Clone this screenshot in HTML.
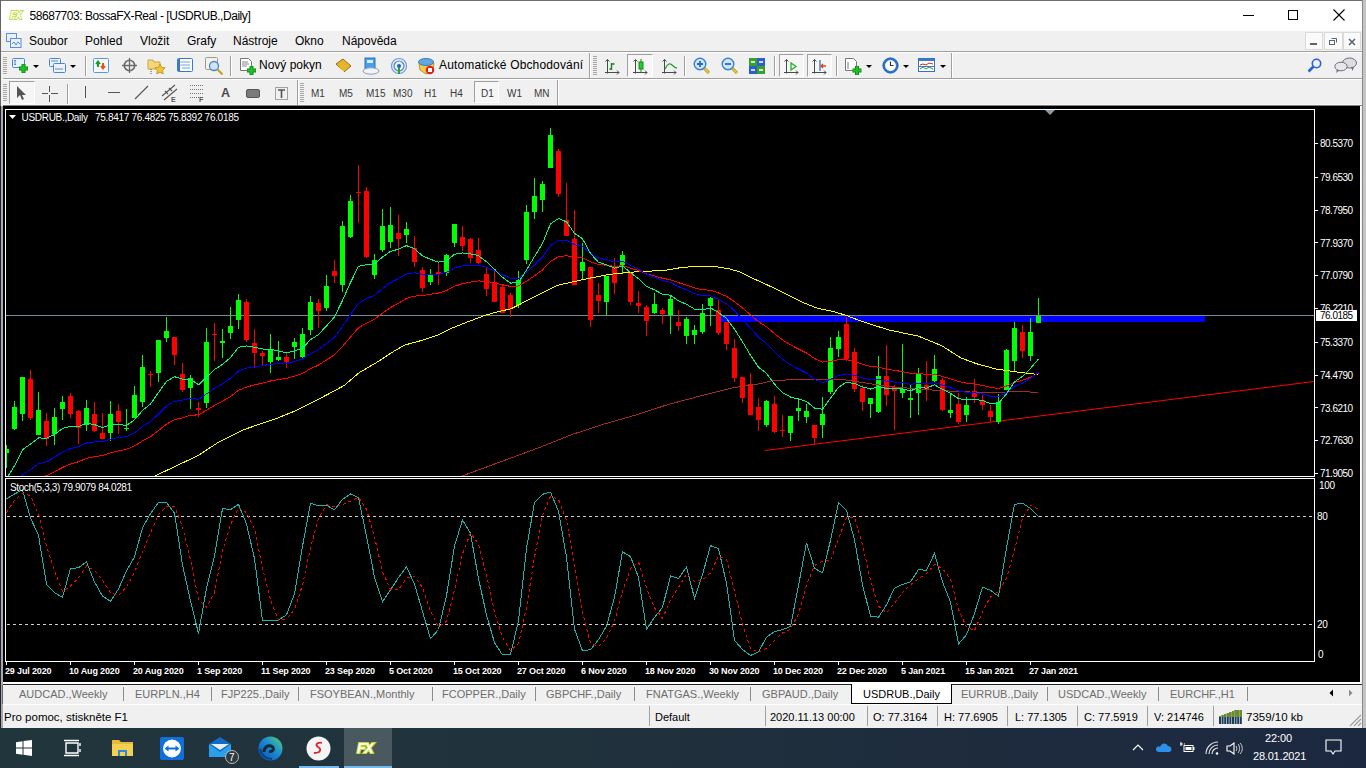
<!DOCTYPE html>
<html><head><meta charset="utf-8">
<style>
*{margin:0;padding:0;box-sizing:border-box}
html,body{width:1366px;height:768px;overflow:hidden;background:#f0f0f0;font-family:"Liberation Sans",sans-serif;font-size:12px;color:#000}
.a{position:absolute}
.t{position:absolute;white-space:nowrap;line-height:14px}
.sep{position:absolute;width:1px;background:#a0a0a0;box-shadow:1px 0 0 #fff}
.grip{position:absolute;width:4px;background:repeating-linear-gradient(to bottom,#a8a8a8 0 1px,transparent 1px 2px)}
.pbtn{position:absolute;border:1px solid #c8c8c8;background:#f7f7f7}
.dd{position:absolute;width:0;height:0;border-left:3px solid transparent;border-right:3px solid transparent;border-top:3px solid #000}
.tab{position:absolute;top:684px;height:19px;line-height:20px;font-size:11px;color:#6d6d6d;white-space:nowrap}
.tsep{position:absolute;top:687px;width:1px;height:14px;background:#8c8c8c}
.st{position:absolute;top:705px;height:22px;line-height:22px;font-size:11px;white-space:nowrap}
.ssep{position:absolute;top:706px;width:1px;height:20px;background:#a0a0a0}
</style></head><body>
<!-- title bar -->
<div class="a" style="left:0;top:0;width:1362px;height:31px;background:#fff"></div>
<div class="a" style="left:0;top:0;width:1362px;height:1px;background:#6f6f6f"></div>
<div class="a" style="left:0;top:0;width:1px;height:106px;background:#646464"></div>
<div class="a" style="left:0;top:106px;width:1px;height:622px;background:#1c2433"></div>
<div class="a" style="left:1px;top:106px;width:2px;height:622px;background:#a9a9a9"></div>
<div class="a" style="left:1362px;top:0;width:4px;height:728px;background:#c4c4c4"></div>
<div class="a" style="left:1362px;top:0;width:1px;height:728px;background:#8a8a8a"></div>
<div class="a" style="left:2px;top:685px;width:1px;height:19px;background:#6a6a6a"></div>
<svg class="a" style="left:8px;top:9px" width="19" height="11" viewBox="0 0 19 11"><text x="2" y="9.5" font-family="Liberation Sans" font-weight="bold" font-style="italic" font-size="10" fill="#fff" stroke="#c4d84a" stroke-width="1.8" paint-order="stroke" letter-spacing="-0.8">FX</text></svg>
<div class="t" style="left:29.5px;top:9px;font-size:12px;letter-spacing:-0.45px">58687703: BossaFX-Real - [USDRUB.,Daily]</div>
<div class="a" style="left:1243px;top:15px;width:11px;height:1px;background:#000"></div>
<div class="a" style="left:1288px;top:10px;width:10px;height:10px;border:1px solid #000"></div>
<svg class="a" style="left:1333px;top:9px" width="12" height="12" viewBox="0 0 12 12"><path d="M0.5 0.5L11.5 11.5M11.5 0.5L0.5 11.5" stroke="#000" stroke-width="1.1"/></svg>

<!-- menu bar -->
<div class="a" style="left:1px;top:51px;width:1361px;height:1px;background:#a0a0a0"></div>
<div class="a" style="left:1px;top:52px;width:1361px;height:1px;background:#fff"></div>
<svg class="a" style="left:6px;top:33px" width="16" height="15" viewBox="0 0 16 15"><rect x="0.5" y="0.5" width="10" height="8" fill="#e8f0fa" stroke="#5b8fd6"/><rect x="4.5" y="5.5" width="10.5" height="9" fill="#e8f0fa" stroke="#5b8fd6"/><path d="M6 11l2-2 2 3 2-3 2 2" fill="none" stroke="#3a6fc0" stroke-width="0.8"/></svg>
<div class="t" style="left:29px;top:34px">Soubor</div>
<div class="t" style="left:85px;top:34px">Pohled</div>
<div class="t" style="left:140px;top:34px">Vložit</div>
<div class="t" style="left:187px;top:34px">Grafy</div>
<div class="t" style="left:233px;top:34px">Nástroje</div>
<div class="t" style="left:295px;top:34px">Okno</div>
<div class="t" style="left:342px;top:34px">Nápověda</div>
<div class="a" style="left:1305px;top:32px;width:18px;height:18px;background:#fafafa;border:1px solid #dadada"></div>
<div class="a" style="left:1324px;top:32px;width:19px;height:18px;background:#fafafa;border:1px solid #dadada"></div>
<div class="a" style="left:1343px;top:32px;width:18px;height:18px;background:#fafafa;border:1px solid #dadada"></div>
<div class="a" style="left:1310px;top:43px;width:7px;height:2px;background:#566573"></div>
<svg class="a" style="left:1329px;top:37px" width="9" height="9" viewBox="0 0 9 9"><rect x="0.5" y="3.5" width="5" height="4" fill="none" stroke="#566573"/><path d="M2.5 1.5h5v4" fill="none" stroke="#566573"/></svg>
<svg class="a" style="left:1348px;top:38px" width="8" height="8" viewBox="0 0 8 8"><path d="M1 1L7 7M7 1L1 7" stroke="#566573" stroke-width="1.6"/></svg>

<!-- toolbar 1 -->
<div class="a" style="left:3px;top:78px;width:1359px;height:1px;background:#a0a0a0"></div>
<div class="a" style="left:1px;top:79px;width:1361px;height:1px;background:#fff"></div>
<div class="grip" style="left:3px;top:57px;height:18px"></div>
<svg class="a" style="left:12px;top:57px" width="18" height="17" viewBox="0 0 18 17"><rect x="0.5" y="1.5" width="12" height="9" rx="1" fill="#eaf2fb" stroke="#4a86d0"/><path d="M3 3v5M2 4l1-1 1 1M2 7l1 1 1-1" stroke="#6a8ab0" fill="none"/><path d="M7.0 11.5h9.0M11.5 7.0v9.0" stroke="#0b8a10" stroke-width="4"/><path d="M7.5 11.5h8.0M11.5 7.5v8.0" stroke="#22c02a" stroke-width="2.2"/></svg>
<div class="dd" style="left:33px;top:65px"></div>
<svg class="a" style="left:49px;top:58px" width="18" height="16" viewBox="0 0 18 16"><rect x="0.5" y="0.5" width="11" height="8" rx="1" fill="#eaf2fb" stroke="#4a86d0"/><rect x="4.5" y="5.5" width="12" height="9" rx="1" fill="#eaf2fb" stroke="#4a86d0"/><path d="M2 3h7M6 11h8" stroke="#6a8ab0"/></svg>
<div class="dd" style="left:70px;top:65px"></div>
<div class="sep" style="left:85px;top:56px;height:20px"></div>
<svg class="a" style="left:93px;top:58px" width="17" height="16" viewBox="0 0 17 16"><rect x="0.5" y="0.5" width="15" height="14" rx="1" fill="#f4f8fd" stroke="#5a98dc"/><path d="M5 9V4M3 6l2-2.5L7 6" stroke="#1aa020" stroke-width="2" fill="none"/><path d="M10 5v5M8 8l2 2.5L12 8" stroke="#e85020" stroke-width="2" fill="none"/></svg>
<svg class="a" style="left:121px;top:57px" width="17" height="17" viewBox="0 0 17 17"><circle cx="8.5" cy="8.5" r="5.2" fill="none" stroke="#6a6a6a" stroke-width="1.6"/><path d="M8.5 1v15M1 8.5h15" stroke="#6a6a6a" stroke-width="1.3"/></svg>
<svg class="a" style="left:147px;top:57px" width="20" height="18" viewBox="0 0 20 18"><path d="M1 3h5l1 2h6v7H1z" fill="#f3d77a" stroke="#c9a640"/><path d="M13 7l1.6 3.3 3.6.5-2.6 2.5.6 3.6-3.2-1.7-3.2 1.7.6-3.6-2.6-2.5 3.6-.5z" fill="#f2c431" stroke="#b8901a" stroke-width="0.8"/><path d="M4 12v5" stroke="#555" stroke-dasharray="1,1"/></svg>
<svg class="a" style="left:177px;top:58px" width="17" height="15" viewBox="0 0 17 15"><rect x="0.5" y="0.5" width="15" height="13" rx="1" fill="#f7fbff" stroke="#3c78c8"/><rect x="1" y="1" width="2" height="12" fill="#3c78c8"/><path d="M5 4h8M5 7h8M5 10h8" stroke="#7aa4d8"/><path d="M3.5 4h1M3.5 7h1" stroke="#e03030"/></svg>
<svg class="a" style="left:205px;top:57px" width="19" height="18" viewBox="0 0 19 18"><rect x="0.5" y="0.5" width="12" height="12" rx="1" fill="#f4f2ea" stroke="#a09a80"/><circle cx="9" cy="9" r="4.5" fill="#cfe3f5" stroke="#4a86c8" stroke-width="1.3"/><path d="M12.5 12.5l5 5" stroke="#c8a020" stroke-width="2.2"/></svg>
<div class="sep" style="left:230px;top:56px;height:20px"></div>
<svg class="a" style="left:240px;top:58px" width="17" height="18" viewBox="0 0 17 18"><path d="M0.5 0.5h8l3 3v9h-11z" fill="#fff" stroke="#777"/><path d="M2 4h6M2 6h7M2 8h5" stroke="#888"/><path d="M7.0 12.5h9.0M11.5 8.0v9.0" stroke="#0b8a10" stroke-width="4"/><path d="M7.5 12.5h8.0M11.5 8.5v8.0" stroke="#22c02a" stroke-width="2.2"/></svg>
<svg class="a" style="left:334px;top:58px" width="18" height="16" viewBox="0 0 18 16"><path d="M2 6l7-5 8 7-7 6z" fill="#e7b52a" stroke="#9a6d10"/><path d="M3 8l7 6" stroke="#fff3b0"/></svg>
<svg class="a" style="left:362px;top:57px" width="18" height="18" viewBox="0 0 18 18"><rect x="3" y="1" width="10" height="11" fill="#4aa0e8" stroke="#2a70b8"/><rect x="5" y="3" width="6" height="3" fill="#d8ecfc"/><ellipse cx="9" cy="14" rx="8" ry="3.2" fill="#f0f4f8" stroke="#8aa0b8"/></svg>
<svg class="a" style="left:390px;top:57px" width="18" height="18" viewBox="0 0 18 18"><circle cx="9" cy="9" r="7.5" fill="none" stroke="#6a9ad8" stroke-width="1.2"/><circle cx="9" cy="9" r="5" fill="none" stroke="#4a86d0" stroke-width="1.2"/><circle cx="9" cy="9" r="2" fill="#2060c0"/><path d="M9 10v7" stroke="#30a030" stroke-width="2"/></svg>
<svg class="a" style="left:417px;top:57px" width="19" height="18" viewBox="0 0 19 18"><path d="M2 6l7-1 8 1-1 8-7 3-6-4z" fill="#f2cc4a" stroke="#c0962a"/><ellipse cx="9" cy="5" rx="7.5" ry="3.5" fill="#62a8e0" stroke="#3a7ab8"/><circle cx="13" cy="13" r="4.3" fill="#e02020"/><rect x="11" y="11" width="4" height="4" fill="#fff"/></svg>
<div class="sep" style="left:589px;top:53px;height:25px"></div>
<div class="grip" style="left:593px;top:56px;height:19px"></div>
<svg class="a" style="left:604px;top:58px" width="17" height="17" viewBox="0 0 17 17"><path d="M3.5 1.5v14M1.5 3.5l2-2 2 2M1 14.5h14M13 12.5l2 2-2 2" stroke="#4a4a4a" fill="none" stroke-width="1"/><path d="M7.5 12V5M7.5 6h3M5.5 11h2" stroke="#108a10" stroke-width="1.4"/></svg>
<div class="a" style="left:627px;top:54px;width:26px;height:23px;border:1px solid;border-color:#a0a0a0 #fff #fff #a0a0a0;background:#f6f6f6"></div>
<svg class="a" style="left:632px;top:58px" width="17" height="17" viewBox="0 0 17 17"><path d="M3.5 1.5v14M1.5 3.5l2-2 2 2M1 14.5h14M13 12.5l2 2-2 2" stroke="#4a4a4a" fill="none" stroke-width="1"/><path d="M9 1v13" stroke="#108a10"/><rect x="7" y="4" width="4" height="7" fill="#20d030" stroke="#108a10"/></svg>
<svg class="a" style="left:661px;top:58px" width="17" height="17" viewBox="0 0 17 17"><path d="M3.5 1.5v14M1.5 3.5l2-2 2 2M1 14.5h14M13 12.5l2 2-2 2" stroke="#4a4a4a" fill="none" stroke-width="1"/><path d="M4 11c3-6 5-6 7-4s3 3 5 3" stroke="#20a030" fill="none" stroke-width="1.3"/></svg>
<div class="sep" style="left:684px;top:56px;height:20px"></div>
<svg class="a" style="left:693px;top:57px" width="18" height="18" viewBox="0 0 18 18"><path d="M10.5 10.5l5.5 5.5" stroke="#b08a10" stroke-width="3"/><path d="M10.5 10.5l5.5 5.5" stroke="#f0d040" stroke-width="1.5"/><circle cx="7" cy="7" r="5.8" fill="#d0e6f8" stroke="#3a82d0" stroke-width="1.4"/><path d="M4 7h6M7 4v6" stroke="#2a6ac0" stroke-width="1.8"/></svg>
<svg class="a" style="left:721px;top:57px" width="18" height="18" viewBox="0 0 18 18"><path d="M10.5 10.5l5.5 5.5" stroke="#b08a10" stroke-width="3"/><path d="M10.5 10.5l5.5 5.5" stroke="#f0d040" stroke-width="1.5"/><circle cx="7" cy="7" r="5.8" fill="#d0e6f8" stroke="#3a82d0" stroke-width="1.4"/><path d="M4 7h6" stroke="#2a6ac0" stroke-width="1.8"/></svg>
<svg class="a" style="left:749px;top:58px" width="17" height="16" viewBox="0 0 17 16"><rect x="0" y="0" width="8" height="8" fill="#38a030"/><rect x="8" y="0" width="8" height="8" fill="#2a60c8"/><rect x="0" y="8" width="8" height="8" fill="#2a60c8"/><rect x="8" y="8" width="8" height="8" fill="#38a030"/><path d="M2 4h4M10 4h4M2 12h4M10 12h4" stroke="#fff" stroke-width="1.5"/></svg>
<div class="sep" style="left:774px;top:56px;height:20px"></div>
<div class="a" style="left:779px;top:54px;width:25px;height:23px;border:1px solid;border-color:#a0a0a0 #fff #fff #a0a0a0;background:#f6f6f6"></div>
<svg class="a" style="left:783px;top:58px" width="17" height="17" viewBox="0 0 17 17"><path d="M3.5 1.5v14M1.5 3.5l2-2 2 2M1 14.5h14M13 12.5l2 2-2 2" stroke="#4a4a4a" fill="none" stroke-width="1"/><path d="M8 5v7l5-3.5z" fill="none" stroke="#20b030" stroke-width="1.3"/></svg>
<div class="a" style="left:807px;top:54px;width:25px;height:23px;border:1px solid;border-color:#a0a0a0 #fff #fff #a0a0a0;background:#f6f6f6"></div>
<svg class="a" style="left:811px;top:58px" width="17" height="17" viewBox="0 0 17 17"><path d="M3.5 1.5v14M1.5 3.5l2-2 2 2M1 14.5h14M13 12.5l2 2-2 2" stroke="#4a4a4a" fill="none" stroke-width="1"/><path d="M9 2v11" stroke="#2a70c0" stroke-width="1.3"/><path d="M15 8h-5M12 6l-2 2 2 2" stroke="#e04020" fill="none" stroke-width="1.3"/></svg>
<div class="sep" style="left:836px;top:56px;height:20px"></div>
<svg class="a" style="left:845px;top:57px" width="18" height="19" viewBox="0 0 18 19"><path d="M0.5 1.5h8l3 3v9h-11z" fill="#fff" stroke="#777"/><path d="M3 5v7" stroke="#777"/><path d="M7.5 13.5h9.0M12 9.0v9.0" stroke="#0b8a10" stroke-width="4"/><path d="M8.0 13.5h8.0M12 9.5v8.0" stroke="#22c02a" stroke-width="2.2"/></svg>
<div class="dd" style="left:866px;top:65px"></div>
<svg class="a" style="left:882px;top:57px" width="17" height="17" viewBox="0 0 17 17"><circle cx="8.5" cy="8.5" r="7.6" fill="#2a78d0" stroke="#1a5aa8"/><circle cx="8.5" cy="8.5" r="5.4" fill="#fff"/><path d="M8.5 4.5v4h3" stroke="#333" fill="none" stroke-width="1.2"/></svg>
<div class="dd" style="left:903px;top:65px"></div>
<svg class="a" style="left:918px;top:58px" width="18" height="15" viewBox="0 0 18 15"><rect x="0.5" y="0.5" width="16" height="13" fill="#fff" stroke="#3a70c0"/><rect x="1" y="1" width="15" height="2" fill="#3a78c8"/><path d="M2 7l3-1 3 1 3-2 4 1" stroke="#c03020" fill="none"/><path d="M2 11l3-2 3 2 3-2 4 2" stroke="#20a030" fill="none"/><path d="M1 8.5h15" stroke="#3a78c8"/></svg>
<div class="dd" style="left:940px;top:65px"></div>
<div class="sep" style="left:951px;top:53px;height:25px"></div>
<svg class="a" style="left:1307px;top:58px" width="15" height="15" viewBox="0 0 15 15"><circle cx="9.5" cy="5.5" r="4.2" fill="none" stroke="#2a62d0" stroke-width="1.6"/><path d="M6.5 8.5l-5 5" stroke="#2a62d0" stroke-width="2.6"/></svg>
<svg class="a" style="left:1334px;top:57px" width="23" height="16" viewBox="0 0 23 16"><ellipse cx="15.5" cy="6" rx="7" ry="5" fill="#dcdce4" stroke="#707070"/><path d="M17 10l1.5 4 1.5-4z" fill="#707070"/><ellipse cx="7" cy="9.5" rx="6.2" ry="4.3" fill="#e6e6ec" stroke="#707070"/><path d="M3 12.5l-1 3.5 3.5-2.5z" fill="#707070"/></svg>
<div class="t" style="left:259px;top:58px">Nový pokyn</div>
<div class="t" style="left:439px;top:58px;letter-spacing:0.15px">Automatické Obchodování</div>

<!-- toolbar 2 -->
<div class="a" style="left:3px;top:104px;width:1359px;height:1px;background:#f8f8f8"></div>
<div class="a" style="left:3px;top:105px;width:1359px;height:1px;background:#828282"></div>
<div class="grip" style="left:3px;top:84px;height:18px"></div>
<div class="a" style="left:9px;top:81px;width:26px;height:23px;border:1px solid;border-color:#a0a0a0 #fff #fff #a0a0a0;background:#f6f6f6"></div>
<svg class="a" style="left:16px;top:86px" width="10" height="14" viewBox="0 0 10 14"><path d="M1 0v12l3-3 2 5 2-1-2-4h4z" fill="#555"/></svg>
<svg class="a" style="left:42px;top:86px" width="16" height="16" viewBox="0 0 16 16"><path d="M7.5 0v6M7.5 9v7M0 7.5h6M9 7.5h7" stroke="#555" stroke-width="1"/></svg>
<div class="sep" style="left:67px;top:84px;height:20px"></div>
<div class="a" style="left:85px;top:86px;width:1px;height:12px;background:#555"></div>
<div class="a" style="left:108px;top:92px;width:12px;height:1px;background:#555"></div>
<svg class="a" style="left:134px;top:85px" width="15" height="15" viewBox="0 0 15 15"><path d="M1 14L14 1" stroke="#555" stroke-width="1.1"/></svg>
<svg class="a" style="left:161px;top:83px" width="17" height="20" viewBox="0 0 17 20"><path d="M1 13L14 2M3 17L16 6M4 8l3 3M8 5l3 3" stroke="#555" stroke-width="1.1"/><text x="10" y="19" font-size="7" font-weight="bold" font-family="Liberation Sans" fill="#555">E</text></svg>
<svg class="a" style="left:189px;top:84px" width="18" height="19" viewBox="0 0 18 19"><path d="M1 1.5h13M1 5.5h13M1 9.5h13M1 13.5h13" stroke="#777" stroke-dasharray="1,1"/><text x="10" y="18" font-size="7" font-weight="bold" font-family="Liberation Sans" fill="#555">F</text></svg>
<div class="t" style="left:221px;top:86px;font-size:12.5px;color:#4a4a4a;font-weight:bold">A</div>
<svg class="a" style="left:246px;top:89px" width="15" height="10" viewBox="0 0 15 10"><rect x="0.5" y="0.5" width="13" height="8" rx="1.5" fill="#7a7a7a" stroke="#555"/></svg>
<svg class="a" style="left:275px;top:87px" width="14" height="14" viewBox="0 0 14 14"><rect x="0.5" y="0.5" width="12" height="12" fill="none" stroke="#555" stroke-dasharray="1,1"/><path d="M3 3h7M6.5 3v8" stroke="#555" stroke-width="1.6"/></svg>
<div class="sep" style="left:297px;top:80px;height:25px"></div>
<div class="grip" style="left:300px;top:83px;height:19px"></div>
<div class="a" style="left:474px;top:81px;width:25px;height:22px;border:1px solid;border-color:#a0a0a0 #fff #fff #a0a0a0;background:#f6f6f6"></div>
<div class="t" style="left:311px;top:87px;font-size:10px;color:#3a3a3a">M1</div>
<div class="t" style="left:339px;top:87px;font-size:10px;color:#3a3a3a">M5</div>
<div class="t" style="left:366px;top:87px;font-size:10px;color:#3a3a3a">M15</div>
<div class="t" style="left:393px;top:87px;font-size:10px;color:#3a3a3a">M30</div>
<div class="t" style="left:424px;top:87px;font-size:10px;color:#3a3a3a">H1</div>
<div class="t" style="left:450px;top:87px;font-size:10px;color:#3a3a3a">H4</div>
<div class="t" style="left:481px;top:87px;font-size:10px;color:#3a3a3a">D1</div>
<div class="t" style="left:507px;top:87px;font-size:10px;color:#3a3a3a">W1</div>
<div class="t" style="left:534px;top:87px;font-size:10px;color:#3a3a3a">MN</div>
<div class="sep" style="left:557px;top:80px;height:25px"></div>

<!-- chart area -->
<div class="a" style="left:3px;top:106px;width:1359px;height:579px;background:#f0f0f0"></div>
<div class="a" style="left:3px;top:106px;width:1357px;height:576px;background:#000"></div>
<div class="a" style="left:1360px;top:106px;width:1px;height:578px;background:#fff"></div>
<div class="a" style="left:3px;top:682px;width:1358px;height:2px;background:#fff"></div>
<div class="a" style="left:3px;top:684px;width:1359px;height:1px;background:#222"></div>
<svg class="a" style="left:0;top:0" width="1366" height="768" viewBox="0 0 1366 768">
<defs><clipPath id="cm"><rect x="6" y="110" width="1308" height="366"/></clipPath>
<clipPath id="cs"><rect x="6" y="479" width="1308" height="182"/></clipPath></defs>
<!-- frames -->
<rect x="5.5" y="109.5" width="1309" height="367" fill="none" stroke="#fff"/>
<rect x="5.5" y="478.5" width="1309" height="183" fill="none" stroke="#fff"/>
<g clip-path="url(#cm)">
<line x1="6" y1="315.5" x2="1314" y2="315.5" stroke="#778899"/>
<rect x="721" y="316" width="484" height="6" fill="#0000ff"/>
<line x1="765" y1="450.5" x2="1314" y2="381.5" stroke="#ff0000"/>
<rect x="6" y="445" width="1" height="23" fill="#00ff00"/>
<rect x="6" y="449" width="3" height="4" fill="#00ff00"/>
<rect x="14" y="401" width="1" height="29" fill="#00ff00"/>
<rect x="12" y="407" width="5" height="22" fill="#00ff00"/>
<rect x="22" y="377" width="1" height="44" fill="#00ff00"/>
<rect x="20" y="377" width="5" height="37" fill="#00ff00"/>
<rect x="30" y="370" width="1" height="50" fill="#ff0000"/>
<rect x="28" y="379" width="5" height="39" fill="#ff0000"/>
<rect x="38" y="392" width="1" height="43" fill="#00ff00"/>
<rect x="36" y="410" width="5" height="25" fill="#00ff00"/>
<rect x="46" y="413" width="1" height="33" fill="#ff0000"/>
<rect x="44" y="421" width="5" height="18" fill="#ff0000"/>
<rect x="54" y="408" width="1" height="37" fill="#00ff00"/>
<rect x="52" y="417" width="5" height="17" fill="#00ff00"/>
<rect x="62" y="396" width="1" height="24" fill="#00ff00"/>
<rect x="60" y="402" width="5" height="7" fill="#00ff00"/>
<rect x="70" y="393" width="1" height="25" fill="#ff0000"/>
<rect x="68" y="396" width="5" height="18" fill="#ff0000"/>
<rect x="78" y="410" width="1" height="34" fill="#ff0000"/>
<rect x="76" y="411" width="5" height="17" fill="#ff0000"/>
<rect x="86" y="400" width="1" height="31" fill="#00ff00"/>
<rect x="84" y="408" width="5" height="17" fill="#00ff00"/>
<rect x="94" y="402" width="1" height="30" fill="#ff0000"/>
<rect x="92" y="414" width="5" height="17" fill="#ff0000"/>
<rect x="102" y="413" width="1" height="26" fill="#ff0000"/>
<rect x="100" y="433" width="5" height="6" fill="#ff0000"/>
<rect x="110" y="401" width="1" height="40" fill="#00ff00"/>
<rect x="108" y="414" width="5" height="19" fill="#00ff00"/>
<rect x="118" y="404" width="1" height="30" fill="#ff0000"/>
<rect x="116" y="411" width="5" height="11" fill="#ff0000"/>
<rect x="126" y="409" width="1" height="22" fill="#00ff00"/>
<rect x="124" y="428" width="5" height="1" fill="#00ff00"/>
<rect x="134" y="386" width="1" height="32" fill="#00ff00"/>
<rect x="132" y="395" width="5" height="23" fill="#00ff00"/>
<rect x="142" y="355" width="1" height="52" fill="#00ff00"/>
<rect x="140" y="367" width="5" height="35" fill="#00ff00"/>
<rect x="150" y="371" width="1" height="16" fill="#ff0000"/>
<rect x="148" y="374" width="5" height="1" fill="#ff0000"/>
<rect x="158" y="340" width="1" height="42" fill="#00ff00"/>
<rect x="156" y="340" width="5" height="33" fill="#00ff00"/>
<rect x="166" y="317" width="1" height="25" fill="#00ff00"/>
<rect x="164" y="331" width="5" height="7" fill="#00ff00"/>
<rect x="174" y="337" width="1" height="28" fill="#ff0000"/>
<rect x="172" y="337" width="5" height="18" fill="#ff0000"/>
<rect x="182" y="363" width="1" height="29" fill="#ff0000"/>
<rect x="180" y="374" width="5" height="16" fill="#ff0000"/>
<rect x="190" y="375" width="1" height="34" fill="#00ff00"/>
<rect x="188" y="378" width="5" height="10" fill="#00ff00"/>
<rect x="198" y="402" width="1" height="15" fill="#ff0000"/>
<rect x="196" y="408" width="5" height="2" fill="#ff0000"/>
<rect x="206" y="328" width="1" height="80" fill="#00ff00"/>
<rect x="204" y="342" width="5" height="61" fill="#00ff00"/>
<rect x="214" y="323" width="1" height="38" fill="#ff0000"/>
<rect x="212" y="334" width="5" height="1" fill="#ff0000"/>
<rect x="222" y="329" width="1" height="29" fill="#00ff00"/>
<rect x="220" y="341" width="5" height="2" fill="#00ff00"/>
<rect x="230" y="307" width="1" height="32" fill="#00ff00"/>
<rect x="228" y="326" width="5" height="7" fill="#00ff00"/>
<rect x="238" y="294" width="1" height="35" fill="#00ff00"/>
<rect x="236" y="300" width="5" height="20" fill="#00ff00"/>
<rect x="246" y="299" width="1" height="43" fill="#ff0000"/>
<rect x="244" y="302" width="5" height="38" fill="#ff0000"/>
<rect x="254" y="329" width="1" height="39" fill="#ff0000"/>
<rect x="252" y="343" width="5" height="10" fill="#ff0000"/>
<rect x="262" y="351" width="1" height="14" fill="#ff0000"/>
<rect x="260" y="353" width="5" height="3" fill="#ff0000"/>
<rect x="270" y="334" width="1" height="39" fill="#00ff00"/>
<rect x="268" y="350" width="5" height="12" fill="#00ff00"/>
<rect x="278" y="341" width="1" height="20" fill="#00ff00"/>
<rect x="276" y="357" width="5" height="3" fill="#00ff00"/>
<rect x="286" y="352" width="1" height="16" fill="#ff0000"/>
<rect x="284" y="357" width="5" height="5" fill="#ff0000"/>
<rect x="294" y="338" width="1" height="21" fill="#00ff00"/>
<rect x="292" y="342" width="5" height="5" fill="#00ff00"/>
<rect x="302" y="328" width="1" height="30" fill="#00ff00"/>
<rect x="300" y="334" width="5" height="23" fill="#00ff00"/>
<rect x="310" y="296" width="1" height="39" fill="#00ff00"/>
<rect x="308" y="302" width="5" height="28" fill="#00ff00"/>
<rect x="318" y="299" width="1" height="29" fill="#ff0000"/>
<rect x="316" y="303" width="5" height="8" fill="#ff0000"/>
<rect x="326" y="275" width="1" height="36" fill="#00ff00"/>
<rect x="324" y="286" width="5" height="22" fill="#00ff00"/>
<rect x="334" y="260" width="1" height="23" fill="#ff0000"/>
<rect x="332" y="271" width="5" height="5" fill="#ff0000"/>
<rect x="342" y="221" width="1" height="71" fill="#00ff00"/>
<rect x="340" y="226" width="5" height="59" fill="#00ff00"/>
<rect x="350" y="195" width="1" height="43" fill="#00ff00"/>
<rect x="348" y="201" width="5" height="36" fill="#00ff00"/>
<rect x="358" y="165" width="1" height="58" fill="#ff0000"/>
<rect x="356" y="192" width="5" height="1" fill="#ff0000"/>
<rect x="366" y="187" width="1" height="71" fill="#ff0000"/>
<rect x="364" y="191" width="5" height="66" fill="#ff0000"/>
<rect x="374" y="254" width="1" height="25" fill="#00ff00"/>
<rect x="372" y="260" width="5" height="15" fill="#00ff00"/>
<rect x="382" y="209" width="1" height="43" fill="#00ff00"/>
<rect x="380" y="226" width="5" height="24" fill="#00ff00"/>
<rect x="390" y="207" width="1" height="41" fill="#00ff00"/>
<rect x="388" y="225" width="5" height="17" fill="#00ff00"/>
<rect x="398" y="215" width="1" height="41" fill="#ff0000"/>
<rect x="396" y="233" width="5" height="6" fill="#ff0000"/>
<rect x="406" y="222" width="1" height="21" fill="#00ff00"/>
<rect x="404" y="229" width="5" height="6" fill="#00ff00"/>
<rect x="414" y="236" width="1" height="31" fill="#ff0000"/>
<rect x="412" y="248" width="5" height="14" fill="#ff0000"/>
<rect x="422" y="267" width="1" height="25" fill="#ff0000"/>
<rect x="420" y="270" width="5" height="18" fill="#ff0000"/>
<rect x="430" y="269" width="1" height="16" fill="#00ff00"/>
<rect x="428" y="274" width="5" height="8" fill="#00ff00"/>
<rect x="438" y="262" width="1" height="23" fill="#ff0000"/>
<rect x="436" y="272" width="5" height="2" fill="#ff0000"/>
<rect x="446" y="254" width="1" height="22" fill="#00ff00"/>
<rect x="444" y="255" width="5" height="18" fill="#00ff00"/>
<rect x="454" y="224" width="1" height="23" fill="#00ff00"/>
<rect x="452" y="224" width="5" height="19" fill="#00ff00"/>
<rect x="462" y="226" width="1" height="25" fill="#ff0000"/>
<rect x="460" y="237" width="5" height="9" fill="#ff0000"/>
<rect x="470" y="238" width="1" height="25" fill="#ff0000"/>
<rect x="468" y="239" width="5" height="19" fill="#ff0000"/>
<rect x="478" y="238" width="1" height="28" fill="#ff0000"/>
<rect x="476" y="250" width="5" height="13" fill="#ff0000"/>
<rect x="486" y="267" width="1" height="29" fill="#ff0000"/>
<rect x="484" y="274" width="5" height="15" fill="#ff0000"/>
<rect x="494" y="271" width="1" height="31" fill="#ff0000"/>
<rect x="492" y="282" width="5" height="20" fill="#ff0000"/>
<rect x="502" y="285" width="1" height="28" fill="#ff0000"/>
<rect x="500" y="287" width="5" height="26" fill="#ff0000"/>
<rect x="510" y="293" width="1" height="24" fill="#ff0000"/>
<rect x="508" y="295" width="5" height="14" fill="#ff0000"/>
<rect x="518" y="271" width="1" height="37" fill="#00ff00"/>
<rect x="516" y="280" width="5" height="25" fill="#00ff00"/>
<rect x="526" y="205" width="1" height="59" fill="#00ff00"/>
<rect x="524" y="212" width="5" height="48" fill="#00ff00"/>
<rect x="534" y="178" width="1" height="41" fill="#00ff00"/>
<rect x="532" y="196" width="5" height="16" fill="#00ff00"/>
<rect x="542" y="181" width="1" height="31" fill="#00ff00"/>
<rect x="540" y="184" width="5" height="16" fill="#00ff00"/>
<rect x="550" y="128" width="1" height="40" fill="#00ff00"/>
<rect x="548" y="135" width="5" height="33" fill="#00ff00"/>
<rect x="558" y="149" width="1" height="48" fill="#ff0000"/>
<rect x="556" y="151" width="5" height="43" fill="#ff0000"/>
<rect x="566" y="183" width="1" height="53" fill="#ff0000"/>
<rect x="564" y="220" width="5" height="16" fill="#ff0000"/>
<rect x="574" y="210" width="1" height="75" fill="#ff0000"/>
<rect x="572" y="239" width="5" height="46" fill="#ff0000"/>
<rect x="582" y="243" width="1" height="37" fill="#00ff00"/>
<rect x="580" y="262" width="5" height="9" fill="#00ff00"/>
<rect x="590" y="267" width="1" height="60" fill="#ff0000"/>
<rect x="588" y="267" width="5" height="53" fill="#ff0000"/>
<rect x="598" y="283" width="1" height="30" fill="#ff0000"/>
<rect x="596" y="295" width="5" height="6" fill="#ff0000"/>
<rect x="606" y="276" width="1" height="39" fill="#00ff00"/>
<rect x="604" y="276" width="5" height="26" fill="#00ff00"/>
<rect x="614" y="258" width="1" height="36" fill="#ff0000"/>
<rect x="612" y="267" width="5" height="16" fill="#ff0000"/>
<rect x="622" y="251" width="1" height="22" fill="#00ff00"/>
<rect x="620" y="255" width="5" height="10" fill="#00ff00"/>
<rect x="630" y="272" width="1" height="33" fill="#ff0000"/>
<rect x="628" y="272" width="5" height="30" fill="#ff0000"/>
<rect x="638" y="291" width="1" height="22" fill="#ff0000"/>
<rect x="636" y="303" width="5" height="3" fill="#ff0000"/>
<rect x="646" y="305" width="1" height="31" fill="#ff0000"/>
<rect x="644" y="307" width="5" height="14" fill="#ff0000"/>
<rect x="654" y="293" width="1" height="21" fill="#00ff00"/>
<rect x="652" y="304" width="5" height="9" fill="#00ff00"/>
<rect x="662" y="308" width="1" height="16" fill="#ff0000"/>
<rect x="660" y="310" width="5" height="4" fill="#ff0000"/>
<rect x="670" y="296" width="1" height="38" fill="#00ff00"/>
<rect x="668" y="299" width="5" height="16" fill="#00ff00"/>
<rect x="678" y="310" width="1" height="21" fill="#ff0000"/>
<rect x="676" y="322" width="5" height="4" fill="#ff0000"/>
<rect x="686" y="317" width="1" height="27" fill="#00ff00"/>
<rect x="684" y="319" width="5" height="17" fill="#00ff00"/>
<rect x="694" y="325" width="1" height="19" fill="#00ff00"/>
<rect x="692" y="330" width="5" height="5" fill="#00ff00"/>
<rect x="702" y="304" width="1" height="30" fill="#00ff00"/>
<rect x="700" y="313" width="5" height="19" fill="#00ff00"/>
<rect x="710" y="297" width="1" height="29" fill="#00ff00"/>
<rect x="708" y="298" width="5" height="8" fill="#00ff00"/>
<rect x="718" y="300" width="1" height="35" fill="#ff0000"/>
<rect x="716" y="310" width="5" height="23" fill="#ff0000"/>
<rect x="726" y="322" width="1" height="28" fill="#ff0000"/>
<rect x="724" y="322" width="5" height="22" fill="#ff0000"/>
<rect x="734" y="339" width="1" height="43" fill="#ff0000"/>
<rect x="732" y="348" width="5" height="30" fill="#ff0000"/>
<rect x="742" y="377" width="1" height="26" fill="#ff0000"/>
<rect x="740" y="377" width="5" height="21" fill="#ff0000"/>
<rect x="750" y="373" width="1" height="42" fill="#ff0000"/>
<rect x="748" y="384" width="5" height="31" fill="#ff0000"/>
<rect x="758" y="398" width="1" height="33" fill="#ff0000"/>
<rect x="756" y="407" width="5" height="13" fill="#ff0000"/>
<rect x="766" y="400" width="1" height="27" fill="#00ff00"/>
<rect x="764" y="401" width="5" height="24" fill="#00ff00"/>
<rect x="774" y="396" width="1" height="37" fill="#ff0000"/>
<rect x="772" y="404" width="5" height="28" fill="#ff0000"/>
<rect x="782" y="415" width="1" height="22" fill="#ff0000"/>
<rect x="780" y="430" width="5" height="1" fill="#ff0000"/>
<rect x="790" y="416" width="1" height="25" fill="#00ff00"/>
<rect x="788" y="416" width="5" height="17" fill="#00ff00"/>
<rect x="798" y="398" width="1" height="23" fill="#00ff00"/>
<rect x="796" y="408" width="5" height="3" fill="#00ff00"/>
<rect x="806" y="404" width="1" height="19" fill="#00ff00"/>
<rect x="804" y="411" width="5" height="6" fill="#00ff00"/>
<rect x="814" y="425" width="1" height="20" fill="#ff0000"/>
<rect x="812" y="425" width="5" height="13" fill="#ff0000"/>
<rect x="822" y="397" width="1" height="41" fill="#00ff00"/>
<rect x="820" y="414" width="5" height="11" fill="#00ff00"/>
<rect x="830" y="337" width="1" height="57" fill="#00ff00"/>
<rect x="828" y="348" width="5" height="44" fill="#00ff00"/>
<rect x="838" y="331" width="1" height="26" fill="#00ff00"/>
<rect x="836" y="337" width="5" height="12" fill="#00ff00"/>
<rect x="846" y="317" width="1" height="44" fill="#ff0000"/>
<rect x="844" y="324" width="5" height="35" fill="#ff0000"/>
<rect x="854" y="348" width="1" height="44" fill="#ff0000"/>
<rect x="852" y="352" width="5" height="37" fill="#ff0000"/>
<rect x="862" y="385" width="1" height="26" fill="#ff0000"/>
<rect x="860" y="388" width="5" height="14" fill="#ff0000"/>
<rect x="870" y="398" width="1" height="20" fill="#00ff00"/>
<rect x="868" y="398" width="5" height="6" fill="#00ff00"/>
<rect x="878" y="356" width="1" height="57" fill="#00ff00"/>
<rect x="876" y="376" width="5" height="36" fill="#00ff00"/>
<rect x="886" y="345" width="1" height="61" fill="#ff0000"/>
<rect x="884" y="376" width="5" height="19" fill="#ff0000"/>
<rect x="894" y="385" width="1" height="45" fill="#ff0000"/>
<rect x="892" y="387" width="5" height="4" fill="#ff0000"/>
<rect x="902" y="344" width="1" height="54" fill="#00ff00"/>
<rect x="900" y="389" width="5" height="4" fill="#00ff00"/>
<rect x="910" y="385" width="1" height="33" fill="#00ff00"/>
<rect x="908" y="398" width="5" height="2" fill="#00ff00"/>
<rect x="918" y="368" width="1" height="47" fill="#00ff00"/>
<rect x="916" y="373" width="5" height="20" fill="#00ff00"/>
<rect x="926" y="361" width="1" height="40" fill="#ff0000"/>
<rect x="924" y="385" width="5" height="5" fill="#ff0000"/>
<rect x="934" y="355" width="1" height="27" fill="#00ff00"/>
<rect x="932" y="369" width="5" height="12" fill="#00ff00"/>
<rect x="942" y="378" width="1" height="33" fill="#ff0000"/>
<rect x="940" y="380" width="5" height="30" fill="#ff0000"/>
<rect x="950" y="393" width="1" height="25" fill="#00ff00"/>
<rect x="948" y="410" width="5" height="3" fill="#00ff00"/>
<rect x="958" y="393" width="1" height="31" fill="#ff0000"/>
<rect x="956" y="404" width="5" height="18" fill="#ff0000"/>
<rect x="966" y="397" width="1" height="25" fill="#00ff00"/>
<rect x="964" y="405" width="5" height="10" fill="#00ff00"/>
<rect x="974" y="379" width="1" height="24" fill="#ff0000"/>
<rect x="972" y="391" width="5" height="6" fill="#ff0000"/>
<rect x="982" y="395" width="1" height="15" fill="#ff0000"/>
<rect x="980" y="400" width="5" height="5" fill="#ff0000"/>
<rect x="990" y="405" width="1" height="17" fill="#ff0000"/>
<rect x="988" y="411" width="5" height="6" fill="#ff0000"/>
<rect x="998" y="394" width="1" height="30" fill="#00ff00"/>
<rect x="996" y="402" width="5" height="20" fill="#00ff00"/>
<rect x="1006" y="349" width="1" height="41" fill="#00ff00"/>
<rect x="1004" y="350" width="5" height="40" fill="#00ff00"/>
<rect x="1014" y="322" width="1" height="49" fill="#00ff00"/>
<rect x="1012" y="328" width="5" height="33" fill="#00ff00"/>
<rect x="1022" y="325" width="1" height="33" fill="#ff0000"/>
<rect x="1020" y="332" width="5" height="19" fill="#ff0000"/>
<rect x="1030" y="318" width="1" height="43" fill="#00ff00"/>
<rect x="1028" y="332" width="5" height="24" fill="#00ff00"/>
<rect x="1038" y="298" width="1" height="25" fill="#00ff00"/>
<rect x="1036" y="316" width="5" height="7" fill="#00ff00"/>
<polyline points="462.0,476.0 540.0,447.3 572.2,434.4 604.4,424.0 636.6,414.8 668.8,404.3 701.0,395.8 733.2,387.7 760.0,383.7 772.0,380.7 807.0,379.0 840.0,379.0 889.0,386.6 938.0,390.5 980.0,392.5 1025.0,391.7 1038.0,392.5" fill="none" stroke="#a52a2a" stroke-width="1" shape-rendering="crispEdges" />
<polyline points="155.6,475.7 179.0,464.6 198.6,455.3 218.0,442.5 244.2,429.5 276.7,418.4 296.0,410.6 316.9,400.0 333.8,391.2 344.0,385.6 359.2,372.6 376.1,362.8 393.0,351.8 404.9,345.0 421.8,340.4 438.7,334.8 452.3,328.0 469.2,321.3 486.1,315.0 500.0,311.2 511.0,308.8 557.0,285.4 588.0,278.5 609.0,274.4 630.0,272.3 640.0,271.6 665.8,270.3 681.9,267.4 698.0,266.3 714.0,266.3 728.6,268.7 739.8,271.9 752.7,278.3 768.8,285.6 785.0,293.6 801.0,301.7 817.0,308.1 833.2,311.4 846.0,315.4 860.0,320.7 888.8,330.0 918.0,336.0 941.5,345.6 961.0,358.0 976.7,363.8 996.0,369.0 1020.0,372.4 1037.8,374.5" fill="none" stroke="#ffff00" stroke-width="1" shape-rendering="crispEdges" />
<polyline points="6.5,500.9 14.5,494.8 22.5,487.3 30.5,482.8 38.5,478.2 46.5,475.7 54.5,471.9 62.5,467.4 70.5,464.0 78.5,461.7 86.5,458.3 94.5,456.6 102.5,455.5 110.5,452.8 118.5,450.9 126.5,449.4 134.5,445.9 142.5,440.9 150.5,436.7 158.5,430.5 166.5,424.1 174.5,419.7 182.5,417.8 190.5,415.2 198.5,414.9 206.5,410.3 214.5,405.4 222.5,401.3 230.5,396.5 238.5,390.3 246.5,387.1 254.5,384.9 262.5,383.1 270.5,381.0 278.5,379.5 286.5,378.4 294.5,376.1 302.5,373.4 310.5,368.8 318.5,365.1 326.5,360.0 334.5,354.6 342.5,346.4 350.5,337.0 358.5,327.8 366.5,323.2 374.5,319.2 382.5,313.2 390.5,307.6 398.5,303.2 406.5,298.4 414.5,296.1 422.5,295.6 430.5,294.2 438.5,293.0 446.5,290.5 454.5,286.3 462.5,283.7 470.5,282.1 478.5,280.9 486.5,281.4 494.5,282.8 502.5,284.8 510.5,286.4 518.5,286.0 526.5,281.3 534.5,275.8 542.5,269.9 550.5,261.2 558.5,256.9 566.5,255.6 574.5,257.5 582.5,257.9 590.5,261.9 598.5,264.5 606.5,265.2 614.5,266.4 622.5,265.7 630.5,268.1 638.5,270.6 646.5,273.8 654.5,275.8 662.5,278.3 670.5,279.7 678.5,282.7 686.5,285.1 694.5,288.0 702.5,289.7 710.5,290.2 718.5,293.0 726.5,296.3 734.5,301.6 742.5,307.9 750.5,314.8 758.5,321.6 766.5,326.8 774.5,333.6 782.5,339.9 790.5,344.9 798.5,349.0 806.5,353.0 814.5,358.5 822.5,362.1 830.5,361.3 838.5,359.7 846.5,359.7 854.5,361.6 862.5,364.3 870.5,366.5 878.5,367.1 886.5,369.0 894.5,370.4 902.5,371.6 910.5,373.4 918.5,373.4 926.5,374.5 934.5,374.2 942.5,376.5 950.5,378.7 958.5,381.5 966.5,383.1 974.5,384.0 982.5,385.4 990.5,387.5 998.5,388.4 1006.5,386.0 1014.5,382.3 1022.5,380.3 1030.5,377.2 1038.5,373.3" fill="none" stroke="#ff0000" stroke-width="1" shape-rendering="crispEdges" />
<polyline points="6.5,493.3 14.5,485.1 22.5,474.9 30.5,469.5 38.5,463.9 46.5,461.6 54.5,457.4 62.5,452.1 70.5,448.6 78.5,446.6 86.5,443.0 94.5,441.9 102.5,441.7 110.5,439.1 118.5,437.5 126.5,436.7 134.5,432.7 142.5,426.5 150.5,421.7 158.5,413.9 166.5,406.1 174.5,401.3 182.5,400.2 190.5,398.2 198.5,399.3 206.5,393.9 214.5,388.4 222.5,383.9 230.5,378.4 238.5,371.0 246.5,368.1 254.5,366.7 262.5,365.7 270.5,364.3 278.5,363.6 286.5,363.5 294.5,361.5 302.5,359.0 310.5,353.6 318.5,349.6 326.5,343.6 334.5,337.2 342.5,326.6 350.5,314.7 358.5,303.2 366.5,298.8 374.5,295.2 382.5,288.6 390.5,282.6 398.5,278.5 406.5,273.8 414.5,272.8 422.5,274.3 430.5,274.3 438.5,274.3 446.5,272.5 454.5,267.9 462.5,265.9 470.5,265.2 478.5,265.0 486.5,267.4 494.5,270.7 502.5,274.8 510.5,278.1 518.5,278.3 526.5,272.1 534.5,264.9 542.5,257.2 550.5,245.6 558.5,240.7 566.5,240.3 574.5,244.6 582.5,246.3 590.5,253.4 598.5,258.0 606.5,259.7 614.5,262.0 622.5,261.4 630.5,265.3 638.5,269.2 646.5,274.2 654.5,277.1 662.5,280.7 670.5,282.4 678.5,286.6 686.5,289.8 694.5,293.7 702.5,295.5 710.5,295.8 718.5,299.4 726.5,303.7 734.5,310.8 742.5,319.2 750.5,328.4 758.5,337.1 766.5,343.3 774.5,351.8 782.5,359.4 790.5,364.8 798.5,369.0 806.5,373.0 814.5,379.2 822.5,382.6 830.5,379.4 838.5,375.4 846.5,373.9 854.5,375.3 862.5,377.9 870.5,379.9 878.5,379.6 886.5,381.1 894.5,382.1 902.5,382.8 910.5,384.3 918.5,383.3 926.5,383.9 934.5,382.6 942.5,385.2 950.5,387.6 958.5,391.0 966.5,392.3 974.5,392.8 982.5,394.0 990.5,396.3 998.5,396.9 1006.5,392.5 1014.5,386.4 1022.5,383.0 1030.5,378.2 1038.5,372.3" fill="none" stroke="#0000ff" stroke-width="1" shape-rendering="crispEdges" />
<polyline points="6.5,478.7 14.5,465.8 22.5,449.7 30.5,444.0 38.5,437.9 46.5,438.2 54.5,434.5 62.5,428.6 70.5,426.1 78.5,426.5 86.5,423.2 94.5,424.7 102.5,427.4 110.5,425.1 118.5,424.6 126.5,425.3 134.5,419.9 142.5,410.4 150.5,404.0 158.5,392.5 166.5,381.4 174.5,376.7 182.5,379.2 190.5,379.1 198.5,384.8 206.5,377.1 214.5,369.5 222.5,364.4 230.5,357.5 238.5,347.2 246.5,346.0 254.5,347.3 262.5,349.0 270.5,349.3 278.5,350.8 286.5,352.9 294.5,351.0 302.5,348.0 310.5,339.7 318.5,334.6 326.5,325.9 334.5,316.9 342.5,300.4 350.5,282.5 358.5,266.3 366.5,264.7 374.5,263.9 382.5,257.1 390.5,251.4 398.5,249.2 406.5,245.6 414.5,248.7 422.5,255.9 430.5,259.3 438.5,262.1 446.5,260.9 454.5,254.3 462.5,252.9 470.5,253.9 478.5,255.6 486.5,261.8 494.5,269.2 502.5,277.2 510.5,283.1 518.5,282.6 526.5,269.9 534.5,256.5 542.5,243.4 550.5,223.8 558.5,218.5 566.5,221.8 574.5,233.4 582.5,238.7 590.5,253.5 598.5,262.3 606.5,264.8 614.5,268.2 622.5,265.9 630.5,272.6 638.5,278.7 646.5,286.5 654.5,289.8 662.5,294.3 670.5,295.2 678.5,300.9 686.5,304.3 694.5,309.1 702.5,309.9 710.5,307.8 718.5,312.5 726.5,318.3 734.5,329.2 742.5,341.8 750.5,355.2 758.5,367.1 766.5,373.4 774.5,384.1 782.5,392.7 790.5,397.0 798.5,399.1 806.5,401.4 814.5,408.1 822.5,409.3 830.5,398.2 838.5,387.2 846.5,382.2 854.5,383.5 862.5,386.9 870.5,389.0 878.5,386.8 886.5,388.4 894.5,388.9 902.5,389.0 910.5,390.8 918.5,387.6 926.5,388.1 934.5,384.8 942.5,389.4 950.5,393.3 958.5,398.6 966.5,399.8 974.5,399.4 982.5,400.5 990.5,403.6 998.5,403.4 1006.5,393.8 1014.5,381.9 1022.5,376.4 1030.5,368.4 1038.5,359.0" fill="none" stroke="#00f884" stroke-width="1" shape-rendering="crispEdges" />
</g>
<g clip-path="url(#cs)">
<line x1="6" y1="516.5" x2="1314" y2="516.5" stroke="#d0d0d0" stroke-dasharray="3,3" stroke-dashoffset="5"/>
<line x1="6" y1="624.5" x2="1314" y2="624.5" stroke="#d0d0d0" stroke-dasharray="3,3" stroke-dashoffset="5"/>
<polyline points="6.5,498.7 14.5,494.0 22.5,489.9 30.5,518.0 38.5,535.3 46.5,584.3 54.5,592.7 62.5,597.3 70.5,568.5 78.5,567.8 86.5,561.8 94.5,581.9 102.5,596.1 110.5,601.3 118.5,588.9 126.5,571.0 134.5,557.0 142.5,527.8 150.5,513.6 158.5,502.5 166.5,502.6 174.5,513.2 182.5,564.9 190.5,600.9 198.5,633.6 206.5,588.0 214.5,555.9 222.5,508.6 230.5,509.6 238.5,504.3 246.5,524.0 254.5,558.6 262.5,620.3 270.5,620.9 278.5,620.1 286.5,614.8 294.5,593.9 302.5,546.3 310.5,503.1 318.5,505.7 326.5,505.3 334.5,509.8 342.5,499.4 350.5,494.0 358.5,497.8 366.5,536.0 374.5,577.1 382.5,601.7 390.5,589.9 398.5,577.6 406.5,567.0 414.5,584.0 422.5,611.5 430.5,638.7 438.5,629.5 446.5,595.7 454.5,546.1 462.5,520.0 470.5,533.2 478.5,578.6 486.5,614.8 494.5,642.6 502.5,655.0 510.5,654.4 518.5,620.8 526.5,548.2 534.5,502.7 542.5,494.3 550.5,492.1 558.5,511.3 566.5,557.1 574.5,629.1 582.5,650.8 590.5,649.7 598.5,639.6 606.5,626.1 614.5,597.3 622.5,551.7 630.5,556.6 638.5,577.4 646.5,629.3 654.5,617.4 662.5,607.4 670.5,575.9 678.5,578.6 686.5,567.0 694.5,598.3 702.5,574.6 710.5,545.6 718.5,548.7 726.5,583.2 734.5,640.2 742.5,649.6 750.5,655.4 758.5,651.9 766.5,637.2 774.5,631.6 782.5,629.7 790.5,626.5 798.5,585.6 806.5,542.8 814.5,568.3 822.5,572.9 830.5,540.5 838.5,502.7 846.5,510.4 854.5,539.7 862.5,584.8 870.5,616.1 878.5,617.3 886.5,604.8 894.5,588.1 902.5,584.4 910.5,581.9 918.5,569.6 926.5,570.3 934.5,553.4 942.5,582.1 950.5,601.9 958.5,644.0 966.5,634.6 974.5,613.5 982.5,587.2 990.5,590.2 998.5,596.4 1006.5,547.8 1014.5,504.3 1022.5,503.2 1030.5,508.5 1038.5,516.7" fill="none" stroke="#20b2aa" stroke-width="1" shape-rendering="crispEdges" /><polyline points="6.5,512.8 14.5,500.0 22.5,493.5 30.5,495.6 38.5,514.4 46.5,545.9 54.5,570.8 62.5,591.4 70.5,586.2 78.5,577.9 86.5,566.0 94.5,570.5 102.5,579.9 110.5,593.1 118.5,595.4 126.5,587.1 134.5,572.3 142.5,552.0 150.5,532.8 158.5,514.6 166.5,506.2 174.5,506.1 182.5,526.9 190.5,559.7 198.5,599.8 206.5,607.5 214.5,592.5 222.5,550.8 230.5,524.7 238.5,507.5 246.5,512.7 254.5,529.0 262.5,567.6 270.5,599.9 278.5,620.4 286.5,618.6 294.5,609.6 302.5,585.0 310.5,547.8 318.5,518.4 326.5,504.7 334.5,506.9 342.5,504.8 350.5,501.1 358.5,497.1 366.5,509.3 374.5,537.0 382.5,571.6 390.5,589.6 398.5,589.8 406.5,578.2 414.5,576.2 422.5,587.5 430.5,611.4 438.5,626.6 446.5,621.3 454.5,590.4 462.5,553.9 470.5,533.1 478.5,543.9 486.5,575.5 494.5,612.0 502.5,637.5 510.5,650.7 518.5,643.4 526.5,607.8 534.5,557.2 542.5,515.1 550.5,496.4 558.5,499.2 566.5,520.2 574.5,565.8 582.5,612.4 590.5,643.2 598.5,646.7 606.5,638.4 614.5,621.0 622.5,591.7 630.5,568.5 638.5,561.9 646.5,587.8 654.5,608.0 662.5,618.0 670.5,600.2 678.5,587.3 686.5,573.9 694.5,581.3 702.5,580.0 710.5,572.9 718.5,556.3 726.5,559.2 734.5,590.7 742.5,624.3 750.5,648.4 758.5,652.3 766.5,648.2 774.5,640.3 782.5,632.9 790.5,629.3 798.5,613.9 806.5,585.0 814.5,565.6 822.5,561.3 830.5,560.6 838.5,538.7 846.5,517.8 854.5,517.6 862.5,544.9 870.5,580.2 878.5,606.1 886.5,612.7 894.5,603.4 902.5,592.4 910.5,584.8 918.5,578.6 926.5,573.9 934.5,564.4 942.5,568.6 950.5,579.1 958.5,609.3 966.5,626.9 974.5,630.7 982.5,611.8 990.5,597.0 998.5,591.3 1006.5,578.2 1014.5,549.5 1022.5,518.5 1030.5,505.3 1038.5,509.5" fill="none" stroke="#ff0000" stroke-width="1" shape-rendering="crispEdges" stroke-dasharray="3,3"/>
</g>
<path d="M1045 110h10l-5 5z" fill="#8a9aa8"/>
<line x1="1315" y1="143.5" x2="1318" y2="143.5" stroke="#fff"/>
<text x="1320" y="147.2" font-size="10" letter-spacing="-0.5" fill="#fff" font-family="Liberation Sans">80.5370</text>
<line x1="1315" y1="177.5" x2="1318" y2="177.5" stroke="#fff"/>
<text x="1320" y="181.0" font-size="10" letter-spacing="-0.5" fill="#fff" font-family="Liberation Sans">79.6530</text>
<line x1="1315" y1="210.5" x2="1318" y2="210.5" stroke="#fff"/>
<text x="1320" y="213.8" font-size="10" letter-spacing="-0.5" fill="#fff" font-family="Liberation Sans">78.7950</text>
<line x1="1315" y1="242.5" x2="1318" y2="242.5" stroke="#fff"/>
<text x="1320" y="246.6" font-size="10" letter-spacing="-0.5" fill="#fff" font-family="Liberation Sans">77.9370</text>
<line x1="1315" y1="275.5" x2="1318" y2="275.5" stroke="#fff"/>
<text x="1320" y="279.4" font-size="10" letter-spacing="-0.5" fill="#fff" font-family="Liberation Sans">77.0790</text>
<line x1="1315" y1="308.5" x2="1318" y2="308.5" stroke="#fff"/>
<text x="1320" y="312.2" font-size="10" letter-spacing="-0.5" fill="#fff" font-family="Liberation Sans">76.2210</text>
<line x1="1315" y1="342.5" x2="1318" y2="342.5" stroke="#fff"/>
<text x="1320" y="346.0" font-size="10" letter-spacing="-0.5" fill="#fff" font-family="Liberation Sans">75.3370</text>
<line x1="1315" y1="375.5" x2="1318" y2="375.5" stroke="#fff"/>
<text x="1320" y="378.8" font-size="10" letter-spacing="-0.5" fill="#fff" font-family="Liberation Sans">74.4790</text>
<line x1="1315" y1="407.5" x2="1318" y2="407.5" stroke="#fff"/>
<text x="1320" y="411.6" font-size="10" letter-spacing="-0.5" fill="#fff" font-family="Liberation Sans">73.6210</text>
<line x1="1315" y1="440.5" x2="1318" y2="440.5" stroke="#fff"/>
<text x="1320" y="444.4" font-size="10" letter-spacing="-0.5" fill="#fff" font-family="Liberation Sans">72.7630</text>
<line x1="1315" y1="473.5" x2="1318" y2="473.5" stroke="#fff"/>
<text x="1320" y="477.2" font-size="10" letter-spacing="-0.5" fill="#fff" font-family="Liberation Sans">71.9050</text>
<rect x="1316" y="310" width="41" height="11" fill="#fff"/>
<text x="1320" y="319" font-size="10" letter-spacing="-0.5" fill="#000" font-family="Liberation Sans">76.0185</text>
<text x="1319" y="489.20000000000005" font-size="10" letter-spacing="-0.3" fill="#fff" font-family="Liberation Sans">100</text>
<text x="1317" y="519.8000000000001" font-size="10" letter-spacing="-0.3" fill="#fff" font-family="Liberation Sans">80</text>
<text x="1317" y="628.2" font-size="10" letter-spacing="-0.3" fill="#fff" font-family="Liberation Sans">20</text>
<text x="1318" y="658.1" font-size="10" letter-spacing="-0.3" fill="#fff" font-family="Liberation Sans">0</text>
<line x1="6.5" y1="662" x2="6.5" y2="665" stroke="#fff"/>
<text x="5" y="674" font-size="9" font-weight="bold" letter-spacing="-0.15" fill="#fff" font-family="Liberation Sans">29 Jul 2020</text>
<line x1="70.5" y1="662" x2="70.5" y2="665" stroke="#fff"/>
<text x="69" y="674" font-size="9" font-weight="bold" letter-spacing="-0.15" fill="#fff" font-family="Liberation Sans">10 Aug 2020</text>
<line x1="134.5" y1="662" x2="134.5" y2="665" stroke="#fff"/>
<text x="133" y="674" font-size="9" font-weight="bold" letter-spacing="-0.15" fill="#fff" font-family="Liberation Sans">20 Aug 2020</text>
<line x1="198.5" y1="662" x2="198.5" y2="665" stroke="#fff"/>
<text x="197" y="674" font-size="9" font-weight="bold" letter-spacing="-0.15" fill="#fff" font-family="Liberation Sans">1 Sep 2020</text>
<line x1="262.5" y1="662" x2="262.5" y2="665" stroke="#fff"/>
<text x="261" y="674" font-size="9" font-weight="bold" letter-spacing="-0.15" fill="#fff" font-family="Liberation Sans">11 Sep 2020</text>
<line x1="326.5" y1="662" x2="326.5" y2="665" stroke="#fff"/>
<text x="325" y="674" font-size="9" font-weight="bold" letter-spacing="-0.15" fill="#fff" font-family="Liberation Sans">23 Sep 2020</text>
<line x1="390.5" y1="662" x2="390.5" y2="665" stroke="#fff"/>
<text x="389" y="674" font-size="9" font-weight="bold" letter-spacing="-0.15" fill="#fff" font-family="Liberation Sans">5 Oct 2020</text>
<line x1="454.5" y1="662" x2="454.5" y2="665" stroke="#fff"/>
<text x="453" y="674" font-size="9" font-weight="bold" letter-spacing="-0.15" fill="#fff" font-family="Liberation Sans">15 Oct 2020</text>
<line x1="518.5" y1="662" x2="518.5" y2="665" stroke="#fff"/>
<text x="517" y="674" font-size="9" font-weight="bold" letter-spacing="-0.15" fill="#fff" font-family="Liberation Sans">27 Oct 2020</text>
<line x1="582.5" y1="662" x2="582.5" y2="665" stroke="#fff"/>
<text x="581" y="674" font-size="9" font-weight="bold" letter-spacing="-0.15" fill="#fff" font-family="Liberation Sans">6 Nov 2020</text>
<line x1="646.5" y1="662" x2="646.5" y2="665" stroke="#fff"/>
<text x="645" y="674" font-size="9" font-weight="bold" letter-spacing="-0.15" fill="#fff" font-family="Liberation Sans">18 Nov 2020</text>
<line x1="710.5" y1="662" x2="710.5" y2="665" stroke="#fff"/>
<text x="709" y="674" font-size="9" font-weight="bold" letter-spacing="-0.15" fill="#fff" font-family="Liberation Sans">30 Nov 2020</text>
<line x1="774.5" y1="662" x2="774.5" y2="665" stroke="#fff"/>
<text x="773" y="674" font-size="9" font-weight="bold" letter-spacing="-0.15" fill="#fff" font-family="Liberation Sans">10 Dec 2020</text>
<line x1="838.5" y1="662" x2="838.5" y2="665" stroke="#fff"/>
<text x="837" y="674" font-size="9" font-weight="bold" letter-spacing="-0.15" fill="#fff" font-family="Liberation Sans">22 Dec 2020</text>
<line x1="902.5" y1="662" x2="902.5" y2="665" stroke="#fff"/>
<text x="901" y="674" font-size="9" font-weight="bold" letter-spacing="-0.15" fill="#fff" font-family="Liberation Sans">5 Jan 2021</text>
<line x1="966.5" y1="662" x2="966.5" y2="665" stroke="#fff"/>
<text x="965" y="674" font-size="9" font-weight="bold" letter-spacing="-0.15" fill="#fff" font-family="Liberation Sans">15 Jan 2021</text>
<line x1="1030.5" y1="662" x2="1030.5" y2="665" stroke="#fff"/>
<text x="1029" y="674" font-size="9" font-weight="bold" letter-spacing="-0.15" fill="#fff" font-family="Liberation Sans">27 Jan 2021</text>
</svg>
<svg class="a" style="left:9px;top:115px" width="8" height="5" viewBox="0 0 8 5"><path d="M0 0h7l-3.5 4z" fill="#fff"/></svg>
<div class="t" style="left:21.5px;top:112px;font-size:10px;line-height:12px;color:#fff;letter-spacing:-0.3px">USDRUB.,Daily&nbsp;&nbsp; 75.8417 76.4825 75.8392 76.0185</div>
<div class="t" style="left:10px;top:482px;font-size:10px;line-height:12px;color:#fff;letter-spacing:-0.38px">Stoch(5,3,3) 79.9079 84.0281</div>

<!-- tabs -->
<div class="a" style="left:851px;top:684px;width:101px;height:20px;background:#fff;border:1px solid #000;border-top:none"></div>
<div class="tab" style="left:19px;color:#6d6d6d">AUDCAD.,Weekly</div>
<div class="tab" style="left:135px;color:#6d6d6d">EURPLN.,H4</div>
<div class="tab" style="left:221px;color:#6d6d6d">FJP225.,Daily</div>
<div class="tab" style="left:310px;color:#6d6d6d">FSOYBEAN.,Monthly</div>
<div class="tab" style="left:442px;color:#6d6d6d">FCOPPER.,Daily</div>
<div class="tab" style="left:546px;color:#6d6d6d">GBPCHF.,Daily</div>
<div class="tab" style="left:646px;color:#6d6d6d">FNATGAS.,Weekly</div>
<div class="tab" style="left:762px;color:#6d6d6d">GBPAUD.,Daily</div>
<div class="tab" style="left:863px;color:#000">USDRUB.,Daily</div>
<div class="tab" style="left:961px;color:#6d6d6d">EURRUB.,Daily</div>
<div class="tab" style="left:1058px;color:#6d6d6d">USDCAD.,Weekly</div>
<div class="tab" style="left:1170px;color:#6d6d6d">EURCHF.,H1</div>
<div class="tsep" style="left:123px"></div>
<div class="tsep" style="left:211px"></div>
<div class="tsep" style="left:298px"></div>
<div class="tsep" style="left:432px"></div>
<div class="tsep" style="left:535px"></div>
<div class="tsep" style="left:634px"></div>
<div class="tsep" style="left:750px"></div>
<div class="tsep" style="left:1047px"></div>
<div class="tsep" style="left:1158px"></div>
<div class="tsep" style="left:1247px"></div>
<svg class="a" style="left:1329px;top:689px" width="6" height="8" viewBox="0 0 6 8"><path d="M4 0.5v7L0.5 4z" fill="#000"/></svg>
<svg class="a" style="left:1349px;top:689px" width="6" height="8" viewBox="0 0 6 8"><path d="M0 0.5v7L3.5 4z" fill="#8c8c8c"/></svg>

<!-- status bar -->
<div class="a" style="left:3px;top:704px;width:1359px;height:1px;background:#fff"></div>
<div class="st" style="left:4px;top:706px;font-size:11.5px">Pro pomoc, stiskněte F1</div>
<div class="ssep" style="left:649px"></div>
<div class="ssep" style="left:765px"></div>
<div class="ssep" style="left:867px"></div>
<div class="ssep" style="left:937px"></div>
<div class="ssep" style="left:1007px"></div>
<div class="ssep" style="left:1077px"></div>
<div class="ssep" style="left:1147px"></div>
<div class="ssep" style="left:1213px"></div>
<div class="st" style="left:655px;top:706px">Default</div>
<div class="st" style="left:770px;top:706px">2020.11.13 00:00</div>
<div class="st" style="left:873px;top:706px">O: 77.3164</div>
<div class="st" style="left:944px;top:706px">H: 77.6905</div>
<div class="st" style="left:1015px;top:706px">L: 77.1305</div>
<div class="st" style="left:1084px;top:706px">C: 77.5919</div>
<div class="st" style="left:1154px;top:706px">V: 214746</div>
<div class="st" style="left:1246px;top:706px;font-size:11.5px">7359/10 kb</div>
<svg class="a" style="left:1219px;top:710px" width="24" height="14" viewBox="0 0 24 14"><rect x="0.0" y="6" width="2" height="8" fill="#1b3d5c"/><rect x="0.0" y="6" width="2" height="1" fill="#6f8f1f"/><rect x="2.6" y="5" width="2" height="9" fill="#1b3d5c"/><rect x="2.6" y="5" width="2" height="2" fill="#6f8f1f"/><rect x="5.2" y="4" width="2" height="10" fill="#1b3d5c"/><rect x="5.2" y="4" width="2" height="3" fill="#6f8f1f"/><rect x="7.8" y="3" width="2" height="11" fill="#1b3d5c"/><rect x="7.8" y="3" width="2" height="4" fill="#6f8f1f"/><rect x="10.4" y="2" width="2" height="12" fill="#1b3d5c"/><rect x="10.4" y="2" width="2" height="5" fill="#6f8f1f"/><rect x="13.0" y="1" width="2" height="13" fill="#1b3d5c"/><rect x="13.0" y="1" width="2" height="6" fill="#6f8f1f"/><rect x="15.6" y="0" width="2" height="14" fill="#1b3d5c"/><rect x="15.6" y="0" width="2" height="7" fill="#6f8f1f"/><rect x="18.2" y="0" width="2" height="14" fill="#1b3d5c"/><rect x="18.2" y="0" width="2" height="7" fill="#6f8f1f"/><rect x="20.8" y="0" width="2" height="14" fill="#1b3d5c"/><rect x="20.8" y="0" width="2" height="7" fill="#6f8f1f"/></svg>
<svg class="a" style="left:1347px;top:712px" width="15" height="15" viewBox="0 0 15 15"><path d="M14 3L3 14M14 7L7 14M14 11L11 14" stroke="#a0a0a0" stroke-width="1.2"/></svg>

<!-- taskbar -->
<div class="a" style="left:0;top:728px;width:1366px;height:40px;background:linear-gradient(to right,#21353d,#20323c 40%,#1e2b3e 75%,#1c2840)"></div>
<svg class="a" style="left:16px;top:740px" width="16" height="16" viewBox="0 0 16 16"><path d="M0 2.2L6.5 1.3v6.3H0zM7.5 1.1L16 0v7.6H7.5zM0 8.4h6.5v6.3L0 13.8zM7.5 8.4H16V16l-8.5-1.2z" fill="#fff"/></svg>
<svg class="a" style="left:63px;top:739px" width="18" height="18" viewBox="0 0 18 18"><path d="M3 4h12v10H3zM1 1.5h15M1 16.5h15" stroke="#fff" fill="none" stroke-width="1.4"/><path d="M17 4v3M17 10v3" stroke="#fff" stroke-width="1.4"/></svg>
<svg class="a" style="left:111px;top:738px" width="23" height="20" viewBox="0 0 23 20"><path d="M1 2h7l2 2h12v14H1z" fill="#e8b83a"/><path d="M1 6h21v12H1z" fill="#f5cf50"/><path d="M7 12h9v6H7z" fill="#2a8ae0"/><path d="M9 14h5v4H9z" fill="#f5cf50"/></svg>
<svg class="a" style="left:160px;top:737px" width="24" height="23" viewBox="0 0 24 23"><rect x="0" y="0" width="24" height="23" rx="2" fill="#0e70d8"/><circle cx="12" cy="11.5" r="9" fill="#fff"/><path d="M4.5 11.5l4-3v2h7v-2l4 3-4 3v-2h-7v2z" fill="#0e70d8"/></svg>
<svg class="a" style="left:208px;top:736px" width="32" height="28" viewBox="0 0 32 28"><path d="M1 8l11-7 11 7v13H1z" fill="#0f6cc8"/><path d="M3 8l9 6 9-6" fill="#e8eef2"/><path d="M1 8l11 8 11-8v13H1z" fill="#2aa0ec"/><circle cx="24" cy="21" r="6.5" fill="#2e3a40" stroke="#bbb"/><text x="21" y="25" font-size="10" font-family="Liberation Sans" fill="#fff">7</text></svg>
<svg class="a" style="left:258px;top:736px" width="25" height="25" viewBox="0 0 25 25"><defs><linearGradient id="edg" x1="0" y1="1" x2="1" y2="0"><stop offset="0" stop-color="#0a4fa8"/><stop offset="0.55" stop-color="#1a8ad8"/><stop offset="1" stop-color="#52d66a"/></linearGradient></defs><circle cx="12.5" cy="12.5" r="12" fill="url(#edg)"/><path d="M6 16c0-5 4-7 7-6s3 4 1 5c-1 1-3 0-3 0" fill="none" stroke="#1a2a33" stroke-width="3"/><path d="M2 13c1 6 6 10 12 10" fill="none" stroke="#0a3f90" stroke-width="2"/></svg>
<svg class="a" style="left:306px;top:736px" width="25" height="25" viewBox="0 0 25 25"><circle cx="12.5" cy="12.5" r="12" fill="#f4f4f4"/><path d="M16 7c-3-1-7 1-5 3s5 3 2 6c-2 1-4 1-5 1" stroke="#e02030" stroke-width="1.8" fill="none"/></svg>
<div class="a" style="left:344px;top:728px;width:48px;height:40px;background:#4a5960"></div>
<div class="a" style="left:299px;top:766px;width:40px;height:2px;background:#76b9ed"></div>
<div class="a" style="left:344px;top:766px;width:48px;height:2px;background:#76b9ed"></div>
<svg class="a" style="left:354px;top:740px" width="28" height="15" viewBox="0 0 28 15"><text x="3" y="13" font-family="Liberation Sans" font-weight="bold" font-style="italic" font-size="14" fill="#fff" stroke="#c2d82a" stroke-width="2.2" paint-order="stroke" letter-spacing="-1.2">FX</text></svg>
<svg class="a" style="left:1132px;top:743px" width="12" height="8" viewBox="0 0 12 8"><path d="M1 7l5-5 5 5" stroke="#fff" fill="none" stroke-width="1.2"/></svg>
<svg class="a" style="left:1155px;top:742px" width="17" height="11" viewBox="0 0 17 11"><path d="M4 10c-3 0-4-3-2-5 1-1 2-1 3 0 1-4 6-5 8-1 3 0 4 3 3 5-1 1-2 1-3 1z" fill="#2a90e8"/></svg>
<svg class="a" style="left:1179px;top:741px" width="16" height="12" viewBox="0 0 16 12"><path d="M1 3h3M2 1v4M5 3h1" stroke="#fff"/><rect x="5" y="4.5" width="9" height="6" fill="none" stroke="#fff"/><rect x="6.5" y="6" width="6" height="3" fill="#fff"/><rect x="14" y="6" width="1.5" height="3" fill="#fff"/></svg>
<svg class="a" style="left:1205px;top:741px" width="14" height="14" viewBox="0 0 14 14"><path d="M1 13a12 12 0 0 1 12-12M4 13a9 9 0 0 1 9-9M7 13a6 6 0 0 1 6-6" stroke="#ddd" fill="none" stroke-width="1.2"/><circle cx="12" cy="12.5" r="1.3" fill="#fff"/></svg>
<svg class="a" style="left:1226px;top:742px" width="18" height="13" viewBox="0 0 18 13"><path d="M1 4h3l4-3v11L4 9H1z" fill="none" stroke="#fff" stroke-width="1.1"/><path d="M10 4c1 1 1 4 0 5M12 2c2 2 2 7 0 9M14 1c3 3 3 8 0 11" stroke="#ccc" fill="none"/></svg>
<div class="t" style="left:1265px;top:731px;font-size:11px;color:#fff;letter-spacing:-0.1px">22:00</div>
<div class="t" style="left:1253px;top:749px;font-size:11px;color:#fff;letter-spacing:-0.2px">28.01.2021</div>
<svg class="a" style="left:1325px;top:739px" width="17" height="17" viewBox="0 0 17 17"><path d="M1 1h15v11H10l-2 3-2-3H1z" fill="none" stroke="#fff" stroke-width="1.1"/></svg>
</body></html>
